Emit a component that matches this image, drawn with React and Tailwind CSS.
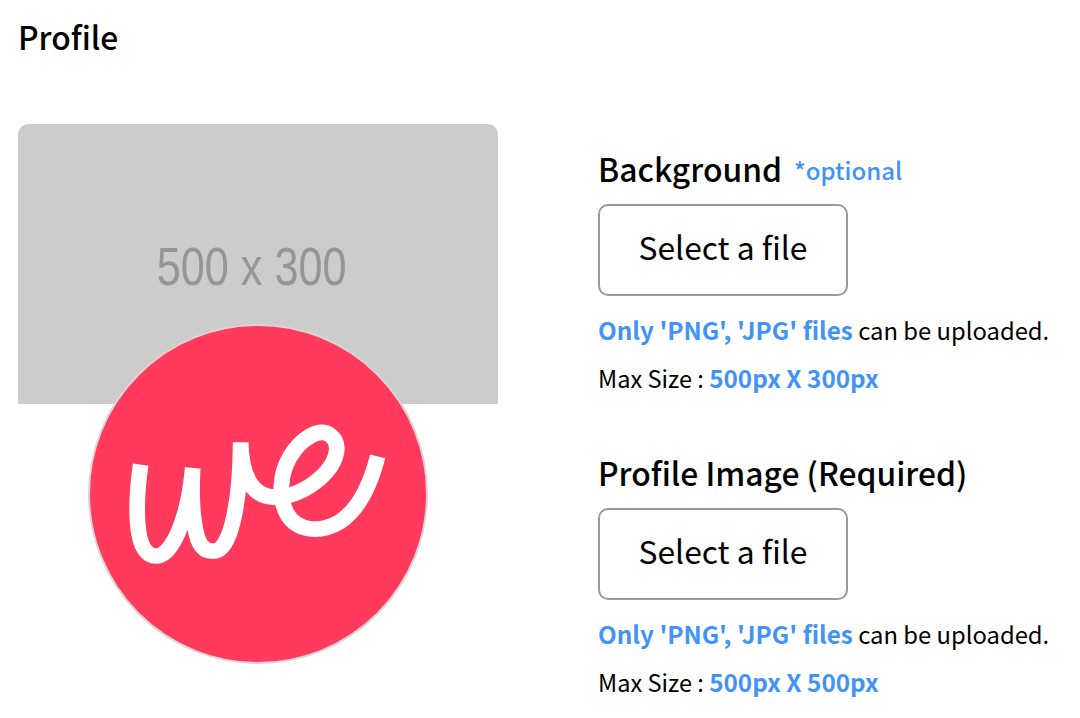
import React from 'react';

const FONT = "font-['Noto_Sans_CJK_KR','Noto_Sans',sans-serif]";

const WeLogo = () => (
  <svg width="340" height="340" viewBox="24 12 1020 1020" className="block">
    <circle cx="534" cy="522" r="507" fill="#ff3a5c" stroke="#dcd4d4" strokeWidth="6" />
    <path
      d="M182 434 C174 490 168 560 174 620 C180 680 200 710 232 708 C275 704 325 600 338 444 C334 520 336 590 350 645 C362 690 385 696 408 692 C450 684 480 560 482 367 C484 450 505 530 585 532 C640 532 700 500 740 455 C770 420 785 370 750 345 C715 320 660 360 630 410 C600 460 595 530 620 580 C650 635 720 640 780 605 C840 565 875 480 893 409"
      fill="none"
      stroke="#fff"
      strokeWidth="47"
    />
  </svg>
);

const UploadBlock = ({ title, optional, size }) => (
  <div>
    <div className="flex items-baseline gap-[12px] h-[48px]">
      <h3 className="text-[31.8px] leading-[48px] font-medium text-black">{title}</h3>
      {optional && <span className="text-[24px] font-medium text-[#4292f7] -translate-y-[2px]">*optional</span>}
    </div>
    <button className="mt-[12px] block w-[250px] h-[92px] pb-[6px] rounded-[10px] border-2 border-[#999] bg-white text-[31.8px] text-black">
      Select a file
    </button>
    <p className="mt-[12px] text-[23.8px] leading-[44px] text-black whitespace-nowrap">
      <span className="text-[24.3px] font-bold text-[#4292f7]">Only 'PNG', 'JPG' files</span> can be uploaded.
    </p>
    <p className="mt-[4px] text-[23.6px] leading-[44px] text-black whitespace-nowrap">
      Max Size : <span className="text-[24.3px] font-bold text-[#4292f7]">{size}</span>
    </p>
  </div>
);

export default function App() {
  return (
    <div className={`${FONT} bg-white h-[718px] overflow-hidden pl-[18px] pt-[12px]`}>
      <h2 className="text-[31.8px] leading-[48px] font-medium text-black">Profile</h2>
      <div className="flex mt-[64px]">
        <div className="w-[480px]">
          <div className="h-[280px] rounded-t-[10px] bg-[#cccccc] flex items-center justify-center pr-[12px] pt-[4px]">
            <span className="font-['Liberation_Sans',sans-serif] text-[54px] text-[#969696] scale-x-[0.8]">500 x 300</span>
          </div>
          <div className="ml-[70px] -mt-[80px] relative">
            <WeLogo />
          </div>
        </div>
        <div className="ml-[100px] pt-[20px] flex flex-col gap-[48px]">
          <UploadBlock title="Background" optional size="500px X 300px" />
          <UploadBlock title="Profile Image (Required)" size="500px X 500px" />
        </div>
      </div>
    </div>
  );
}
